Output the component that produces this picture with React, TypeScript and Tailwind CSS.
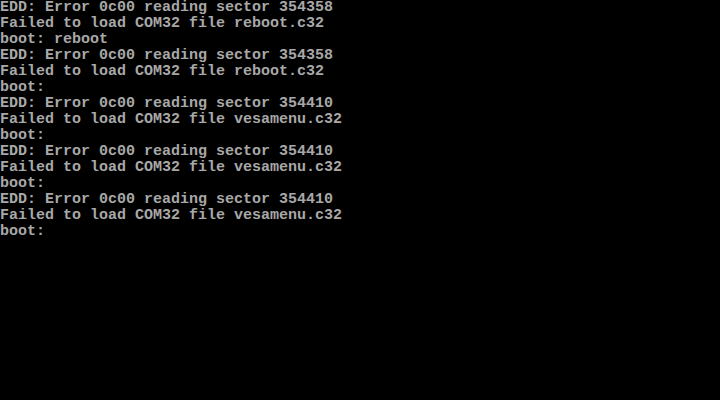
import React from "react";

const lines = [
  "EDD: Error 0c00 reading sector 354358",
  "Failed to load COM32 file reboot.c32",
  "boot: reboot",
  "EDD: Error 0c00 reading sector 354358",
  "Failed to load COM32 file reboot.c32",
  "boot:",
  "EDD: Error 0c00 reading sector 354410",
  "Failed to load COM32 file vesamenu.c32",
  "boot:",
  "EDD: Error 0c00 reading sector 354410",
  "Failed to load COM32 file vesamenu.c32",
  "boot:",
  "EDD: Error 0c00 reading sector 354410",
  "Failed to load COM32 file vesamenu.c32",
  "boot:",
];

export default function App() {
  return (
    <div className="w-[720px] h-[400px] bg-black overflow-hidden">
      <div className="flex flex-col font-['Liberation_Mono','DejaVu_Sans_Mono',monospace] text-[15px] leading-[16px] font-bold text-[#a8a8a8] whitespace-pre">
        {lines.map((l, i) => (
          <div key={i} className="h-4">
            {l}
          </div>
        ))}
      </div>
    </div>
  );
}
